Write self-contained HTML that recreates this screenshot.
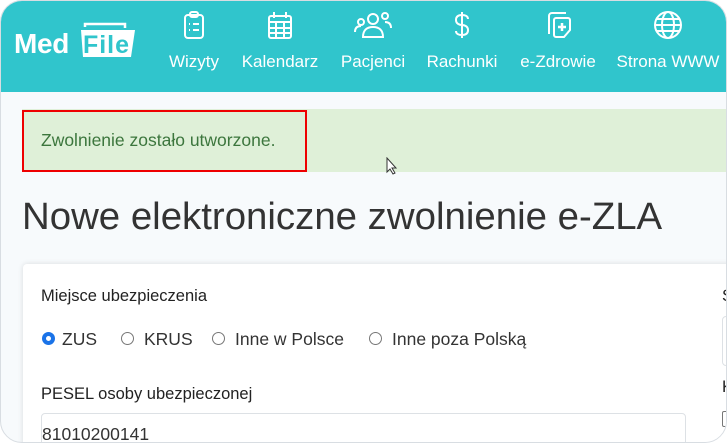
<!DOCTYPE html>
<html><head><meta charset="utf-8"><style>
*{box-sizing:border-box;margin:0;padding:0}
html,body{width:727px;height:443px;overflow:hidden;background:#fff}
body{font-family:"Liberation Sans",sans-serif}
.frame{position:absolute;left:0;top:0;width:727px;height:443px;border-radius:22px;overflow:hidden;background:#f7fafc;border:1px solid #d8dde2}
.hdr{position:absolute;left:0;top:0;width:727px;height:91px;background:#30c5cc}
.nav{position:absolute;top:51px;color:#fff;font-size:17px;transform:translateX(-50%);white-space:nowrap}
.ic{position:absolute;top:9px;transform:translateX(-50%)}
.alert{position:absolute;left:21px;top:108px;width:710px;height:63px;background:#dff0d8}
.red{position:absolute;left:21px;top:109px;width:285px;height:62px;border:2px solid #e00}
.alert span{position:absolute;left:19px;top:21px;color:#3c763d;font-size:17.5px}
h1{position:absolute;left:21px;top:194px;font-size:38.4px;font-weight:300;color:#333;white-space:nowrap}
.card{position:absolute;left:22px;top:263px;width:720px;height:200px;background:#fff;box-shadow:0 0 6px rgba(0,0,0,.12);border-radius:4px}
.lbl{position:absolute;font-size:16.5px;color:#222}
.r{position:absolute;top:331px;width:13px;height:13px;border:1px solid #777;border-radius:50%}
.rt{position:absolute;top:328px;font-size:17.5px;color:#333}
.inp{position:absolute;left:40px;top:412px;width:645px;height:50px;border:1px solid #dde1e5;border-radius:4px}
</style></head><body>
<div class="frame">
<div class="hdr">
  <div style="position:absolute;left:13px;top:27px;color:#fff;font-weight:bold;font-size:28px;letter-spacing:-0.3px">Med</div>
  <svg style="position:absolute;left:78px;top:19px" width="58" height="38" viewBox="0 0 58 38">
    <path d="M6 7 v-3 h40 v4" fill="none" stroke="#fff" stroke-width="2.5"/>
    <path d="M2 10 h54 l-4 27 h-48 z" fill="#fff"/>
    <text x="4" y="33" font-family="Liberation Sans" font-weight="bold" font-size="25" fill="#30c5cc" textLength="46">File</text>
  </svg>
  <svg class="ic" style="left:193px" width="24" height="30" viewBox="0 0 24 30" fill="none" stroke="#fff" stroke-width="2"><rect x="3" y="5" width="18" height="23" rx="3"/><rect x="8" y="2" width="8" height="5" rx="2"/><path d="M7 14h1M11 14h6M7 20h1M11 20h6"/></svg>
  <div class="nav" style="left:193px">Wizyty</div>
  <svg class="ic" style="left:279px" width="28" height="30" viewBox="0 0 28 30" fill="none" stroke="#fff" stroke-width="2"><rect x="3" y="6" width="22" height="22" rx="2"/><path d="M8 2v6M20 2v6M3 12h22M3 18h22M3 23h22M10 12v16M18 12v16"/></svg>
  <div class="nav" style="left:279px">Kalendarz</div>
  <svg class="ic" style="left:372px" width="40" height="30" viewBox="0 0 40 30" fill="none" stroke="#fff" stroke-width="2"><circle cx="20" cy="9" r="5"/><path d="M10 27c0-7 4-10 10-10s10 3 10 10z"/><circle cx="8" cy="12" r="3"/><circle cx="32" cy="6" r="3"/><path d="M2 22c0-4 2-6 6-6M38 18c0-4-2-6-6-6"/></svg>
  <div class="nav" style="left:372px">Pacjenci</div>
  <svg class="ic" style="left:461px" width="20" height="30" viewBox="0 0 20 30" fill="none" stroke="#fff" stroke-width="2"><path d="M10 2v26M16 9c0-3-3-4-6-4s-6 1-6 5 4 5 6 5 6 1 6 5-3 5-6 5-6-1-6-4"/></svg>
  <div class="nav" style="left:461px">Rachunki</div>
  <svg class="ic" style="left:557px" width="32" height="30" viewBox="0 0 32 30" fill="none" stroke="#fff" stroke-width="2"><path d="M7 24V6a3 3 0 0 1 3-3h14"/><path d="M12 10a2 2 0 0 1 2-2h12a2 2 0 0 1 2 2v10l-6 7h-8a2 2 0 0 1-2-2z"/><path d="M20 13v8M16 17h8" stroke-width="2.5"/></svg>
  <div class="nav" style="left:557px">e-Zdrowie</div>
  <svg class="ic" style="left:667px" width="32" height="30" viewBox="0 0 32 30" fill="none" stroke="#fff" stroke-width="2"><circle cx="16" cy="15" r="13"/><ellipse cx="16" cy="15" rx="6" ry="13"/><path d="M3 15h26M5 9h22M5 21h22"/></svg>
  <div class="nav" style="left:667px">Strona WWW</div>
</div>
<div class="alert"><span>Zwolnienie zostało utworzone.</span></div>
<div class="red"></div>
<svg style="position:absolute;left:385px;top:156px" width="12" height="18" viewBox="0 0 12 18"><path d="M1 1v14l3-3 3 5 2-1-3-5h4z" fill="#fff" stroke="#333"/></svg>
<h1>Nowe elektroniczne zwolnienie e-ZLA</h1>
<div class="card"></div>
<div class="lbl" style="left:40px;top:286px">Miejsce ubezpieczenia</div>
<div class="r" style="left:41px;border:4px solid #1a73e8;background:#fff"></div><div class="rt" style="left:61px">ZUS</div>
<div class="r" style="left:120px"></div><div class="rt" style="left:143px">KRUS</div>
<div class="r" style="left:211px"></div><div class="rt" style="left:234px">Inne w Polsce</div>
<div class="r" style="left:368px"></div><div class="rt" style="left:391px">Inne poza Polską</div>
<div class="lbl" style="left:40px;top:384px">PESEL osoby ubezpieczonej</div>
<div class="inp"></div>
<div class="rt" style="left:41px;top:423px">81010200141</div>
<div class="lbl" style="left:721px;top:286px">S</div>
<div style="position:absolute;left:721px;top:315px;width:20px;height:50px;border:1px solid #dde1e5;border-radius:4px"></div>
<div class="lbl" style="left:721px;top:377px">K</div>
<div style="position:absolute;left:721px;top:410px;width:14px;height:16px;border:1px solid #777;border-radius:2px"></div>
</div>
</body></html>
